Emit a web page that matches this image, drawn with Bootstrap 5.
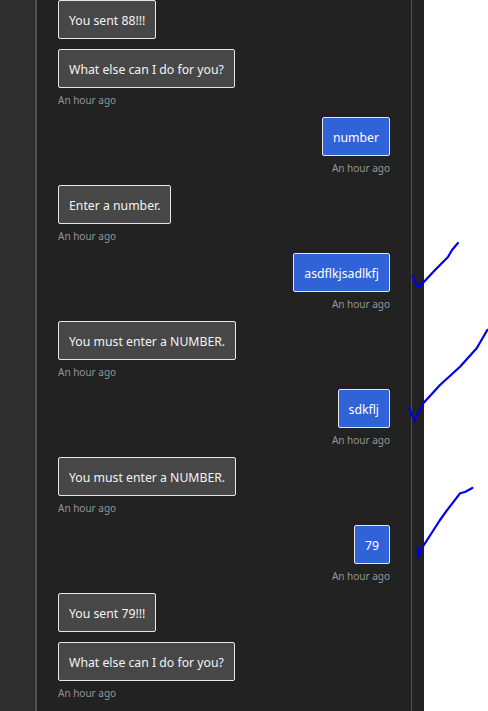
<!DOCTYPE html>
<html lang="en">
<head>
<meta charset="utf-8">
<title>Chat</title>
<link href="https://cdn.jsdelivr.net/npm/bootstrap@5.3.0/dist/css/bootstrap.min.css" rel="stylesheet">
<style>
html, body { height: 100%; }
body { background: #fff; overflow: hidden; font-family: "Noto Sans", "Open Sans", sans-serif; }
.shell { width: 424px; height: 711px; background: #222; }
.side-rail { width: 37px; background: #2f2f2f; border-right: 2px solid #505050; }
.chat-pane { width: 375px; border-right: 1px solid #4f4f4f; padding: 0 21px 0 21px; }
.gutter-strip { width: 12px; }
.msg-group { margin-bottom: 10px; }
.bubble { font-size: 12.25px; line-height: 17px; padding: 11px 10px 9px; border: 1px solid #e6e6e6; border-radius: 2px; color: #f3f3f3; height: 39px; white-space: nowrap; }
.bubble + .bubble { margin-top: 10px; }
.bubble-bot { background: #474747; }
.bubble-user { background: #3063d8; color: #fff; }
.stamp { font-size: 10px; line-height: 14px; color: #949494; margin-top: 5px; height: 14px; }
.ink { position: absolute; left: 0; top: 0; pointer-events: none; }
.ink path { fill: none; stroke: #0000e6; stroke-width: 2.2; stroke-linejoin: round; stroke-linecap: round; }
</style>
</head>
<body>
<div class="shell d-flex position-relative">
  <div class="side-rail flex-shrink-0"></div>
  <div class="chat-pane flex-shrink-0 d-flex flex-column">
    <div class="msg-group d-flex flex-column align-items-start">
      <div class="bubble bubble-bot">You sent 88!!!</div>
      <div class="bubble bubble-bot">What else can I do for you?</div>
      <div class="stamp">An hour ago</div>
    </div>
    <div class="msg-group d-flex flex-column align-items-end">
      <div class="bubble bubble-user">number</div>
      <div class="stamp">An hour ago</div>
    </div>
    <div class="msg-group d-flex flex-column align-items-start">
      <div class="bubble bubble-bot">Enter a number.</div>
      <div class="stamp">An hour ago</div>
    </div>
    <div class="msg-group d-flex flex-column align-items-end">
      <div class="bubble bubble-user">asdflkjsadlkfj</div>
      <div class="stamp">An hour ago</div>
    </div>
    <div class="msg-group d-flex flex-column align-items-start">
      <div class="bubble bubble-bot">You must enter a NUMBER.</div>
      <div class="stamp">An hour ago</div>
    </div>
    <div class="msg-group d-flex flex-column align-items-end">
      <div class="bubble bubble-user">sdkflj</div>
      <div class="stamp">An hour ago</div>
    </div>
    <div class="msg-group d-flex flex-column align-items-start">
      <div class="bubble bubble-bot">You must enter a NUMBER.</div>
      <div class="stamp">An hour ago</div>
    </div>
    <div class="msg-group d-flex flex-column align-items-end">
      <div class="bubble bubble-user">79</div>
      <div class="stamp">An hour ago</div>
    </div>
    <div class="msg-group d-flex flex-column align-items-start">
      <div class="bubble bubble-bot">You sent 79!!!</div>
      <div class="bubble bubble-bot">What else can I do for you?</div>
      <div class="stamp">An hour ago</div>
    </div>
  </div>
  <div class="gutter-strip flex-shrink-0"></div>
</div>
<svg class="ink" width="488" height="711" viewBox="0 0 488 711" aria-hidden="true">
  <path d="M412.3 276 L417 286 L420 286 L437 268 L448 257 L452 250 L458 243"/>
  <path d="M409.3 408.3 L414.3 420.7 L423.3 403.3 L440 385 L460 366.7 L476.7 348.3 L487.3 330"/>
  <path d="M418 547.3 L418.7 557.3 L420.7 550 L440 520 L446.7 510.7 L460 493.3 L465 492 L472.3 488"/>
</svg>
<script src="https://cdn.jsdelivr.net/npm/bootstrap@5.3.0/dist/js/bootstrap.bundle.min.js"></script>
</body>
</html>
